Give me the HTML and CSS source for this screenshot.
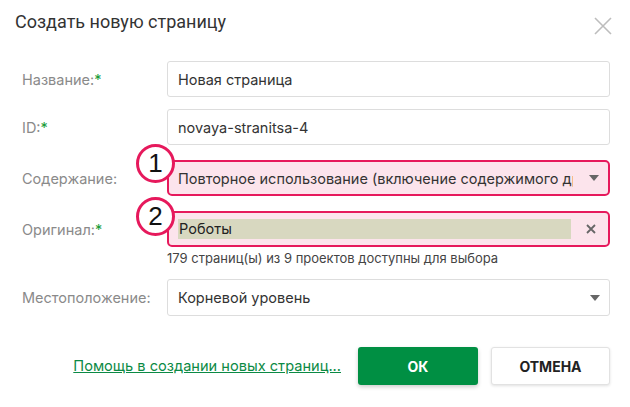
FILE: index.html
```html
<!DOCTYPE html>
<html lang="ru">
<head>
<meta charset="utf-8">
<link rel="stylesheet" href="styles.css">
</head>
<body>
<div class="dialog">
  <div class="header">
    <h1 class="title">Создать новую страницу</h1>
    <button class="close" aria-label="Закрыть">
      <svg width="18" height="18" viewBox="0 0 18 18"><path d="M1 1L17 17M17 1L1 17" stroke="#bdbdbd" stroke-width="1.6" fill="none"/></svg>
    </button>
  </div>
  <div class="form">
    <div class="row r-name">
      <label class="label">Название:<span class="req">*</span></label>
      <div class="field input">Новая страница</div>
    </div>
    <div class="row r-id">
      <label class="label">ID:<span class="req">*</span></label>
      <div class="field input">novaya-stranitsa-4</div>
    </div>
    <div class="row r-content">
      <label class="label">Содержание:</label>
      <div class="field select hl">
        <span class="val">Повторное использование (включение содержимого другой страницы)</span>
        <span class="arrow"></span>
        <span class="badge">1</span>
      </div>
    </div>
    <div class="row r-orig">
      <label class="label">Оригинал:<span class="req">*</span></label>
      <div class="field hl chipfield">
        <span class="chip">Роботы</span>
        <svg class="clear" width="10" height="10" viewBox="0 0 10 10"><path d="M1 1L9 9M9 1L1 9" stroke="#666" stroke-width="1.8" fill="none"/></svg>
        <span class="badge">2</span>
      </div>
    </div>
    <div class="row r-help">
      <span></span>
      <div class="help">179 страниц(ы) из 9 проектов доступны для выбора</div>
    </div>
    <div class="row r-loc">
      <label class="label">Местоположение:</label>
      <div class="field select">
        <span class="val">Корневой уровень</span>
        <span class="arrow"></span>
      </div>
    </div>
  </div>
  <div class="footer">
    <a class="help-link" href="#">Помощь в создании новых страниц...</a>
    <button class="btn ok">ОК</button>
    <button class="btn cancel">ОТМЕНА</button>
  </div>
</div>
</body>
</html>
```
FILE: styles.css
```css
html, body {
  margin: 0;
  padding: 0;
  background: #fff;
}
body {
  font-family: Inter, "Noto Sans", sans-serif;
  color: #333;
  width: 630px;
  height: 407px;
  overflow: hidden;
}
.dialog {
  padding: 0 20px 0 0;
}
.header {
  display: flex;
  justify-content: space-between;
  align-items: center;
  height: 44px;
  padding-left: 15px;
}
.title {
  margin: 0;
  font-family: Roboto, sans-serif;
  font-weight: 400;
  font-size: 18px;
  color: #333;
  line-height: 24px;
}
.close {
  border: 0;
  background: none;
  padding: 0;
  margin-right: -2px;
  margin-top: 7px;
  width: 18px;
  height: 18px;
  display: flex;
}
.form {
  display: flex;
  flex-direction: column;
  padding-top: 17px;
}
.row {
  display: grid;
  grid-template-columns: 167px 1fr;
  align-items: center;
}
.r-id { margin-top: 12px; }
.r-content { margin-top: 15px; }
.r-orig { margin-top: 15px; }
.r-help { margin-top: 3px; }
.r-loc { margin-top: 13px; }
.label {
  padding-left: 22px;
  font-size: 14.5px;
  color: #8a8a8a;
}
.req {
  color: #1a9c3a;
}
.field {
  position: relative;
  box-sizing: border-box;
  height: 36px;
  border: 1px solid #ddd;
  border-radius: 3px;
  display: flex;
  align-items: center;
  padding: 0 10px;
  font-size: 14.5px;
  color: #333;
  white-space: nowrap;
  min-width: 0;
}
.select .val {
  flex: 1;
  overflow: hidden;
  text-overflow: clip;
  margin-right: 16px;
}
.arrow {
  width: 0;
  height: 0;
  border-left: 5.5px solid transparent;
  border-right: 5.5px solid transparent;
  border-top: 6px solid #666;
  margin-right: -1px;
}
.r-loc .field { height: 37px; }
.hl {
  background: #fce4ec;
  border: 2px solid #e6195c;
  border-radius: 5px;
  padding-left: 9px;
}
.chipfield {
  padding-right: 12px;
}
.chip {
  flex: 1;
  background: #d8d8c0;
  height: 20px;
  line-height: 20px;
  padding-left: 1px;
  color: #222;
  margin-right: 15px;
}
.clear {
  flex: none;
}
.badge {
  position: absolute;
  left: -33px;
  top: -18px;
  width: 33px;
  height: 33px;
  border: 3px solid #e6195c;
  border-radius: 50%;
  background: #fff;
  color: #111;
  font-family: "Liberation Sans", sans-serif;
  font-size: 26px;
  line-height: 33px;
  text-align: center;
}
.r-orig .badge {
  top: -16px;
}
.help {
  font-size: 13px;
  color: #444;
  line-height: 16px;
}
.footer {
  display: flex;
  justify-content: flex-end;
  align-items: center;
  margin-top: 31px;
}
.help-link {
  font-family: Inter, sans-serif;
  font-size: 14.6px;
  color: #0c8a45;
  text-decoration: underline;
  margin-right: 17px;
  white-space: nowrap;
}
.btn {
  box-sizing: border-box;
  height: 38px;
  border-radius: 3px;
  font-family: Inter, sans-serif;
  font-weight: 700;
  font-size: 14px;
  cursor: pointer;
}
.ok {
  width: 120px;
  background: #008f43;
  color: #fff;
  border: 0;
  box-shadow: 0 2px 4px rgba(0,0,0,0.2);
  margin-right: 13px;
}
.cancel {
  width: 119px;
  background: #fff;
  color: #222;
  border: 1px solid #e2e2e2;
  box-shadow: 0 1px 3px rgba(0,0,0,0.12);
}
```
